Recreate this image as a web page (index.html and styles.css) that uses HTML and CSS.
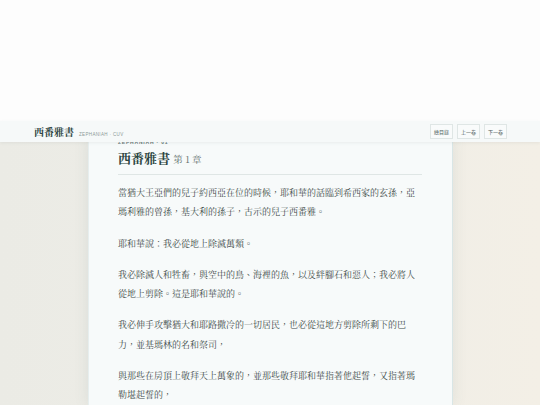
FILE: index.html
```html
<!DOCTYPE html>
<html lang="zh-Hant">
<head>
<meta charset="utf-8">
<title>西番雅書 第1章</title>
<link rel="stylesheet" href="styles.css">
</head>
<body>
<div class="top-space"></div>
<header class="bar">
  <div class="brand">
    <span class="brand-title">西番雅書</span>
    <span class="brand-sub">ZEPHANIAH · CUV</span>
  </div>
  <nav class="nav">
    <a class="btn">總目錄</a>
    <a class="btn">上一卷</a>
    <a class="btn">下一卷</a>
  </nav>
</header>
<main class="stage">
  <article class="card">
    <div class="eyebrow">ZEPHANIAH · 01</div>
    <h1 class="title">西番雅書 <span class="chap">第 1 章</span></h1>
    <div class="rule"></div>
    <p>當猶大王亞們的兒子約西亞在位的時候，耶和華的話臨到希西家的玄孫，亞瑪利雅的曾孫，基大利的孫子，古示的兒子西番雅。</p>
    <p>耶和華說：我必從地上除滅萬類。</p>
    <p>我必除滅人和牲畜，與空中的鳥、海裡的魚，以及絆腳石和惡人；我必將人從地上剪除。這是耶和華說的。</p>
    <p>我必伸手攻擊猶大和耶路撒冷的一切居民，也必從這地方剪除所剩下的巴力，並基瑪林的名和祭司，</p>
    <p>與那些在房頂上敬拜天上萬象的，並那些敬拜耶和華指著他起誓，又指著瑪勒堪起誓的，</p>
  </article>
</main>
</body>
</html>
```
FILE: styles.css
```css
html, body {
  margin: 0;
  padding: 0;
}
body {
  background: #fdfdfd;
  font-family: "Noto Serif CJK TC", "Liberation Serif", "Noto Sans CJK TC", serif;
  overflow: hidden;
  height: 405px;
}
.top-space {
  height: 121px;
  background: #fdfdfd;
}
.bar {
  position: relative;
  z-index: 2;
  height: 21px;
  background: rgba(246, 249, 249, 0.97);
  box-shadow: 0 1px 3px rgba(60, 80, 80, 0.08);
  display: flex;
  align-items: center;
  justify-content: space-between;
  padding: 0 33px 0 34px;
}
.brand {
  display: flex;
  align-items: baseline;
  gap: 5px;
}
.brand-title {
  font-size: 10px;
  font-weight: 700;
  color: #2c4541;
}
.brand-sub {
  font-family: "Liberation Sans", sans-serif;
  font-size: 4.5px;
  letter-spacing: 0.35px;
  color: #8c9a98;
}
.nav {
  display: flex;
  gap: 4px;
}
.btn {
  font-family: "Noto Sans CJK TC", sans-serif;
  font-size: 5px;
  color: #4a5a58;
  border: 1px solid #dfe6e5;
  background: #f9fbfb;
  height: 13px;
  padding: 0 3px;
  display: flex;
  align-items: center;
}
.stage {
  height: 263px;
  background: linear-gradient(90deg, #ebebe5 0%, #eeede7 45%, #f3efe6 100%);
  display: flex;
  justify-content: center;
  padding-left: 1px;
}
.card {
  width: 304px;
  margin-top: -6px;
  padding: 0 30px 0 29px;
  background: #f7fafa;
  border-left: 1px solid #e6eeee;
  border-right: 1px solid #d9e6e6;
  box-shadow: 0 0 14px rgba(70, 100, 100, 0.10);
  color: #3d4b49;
}
.eyebrow {
  font-family: "Liberation Sans", sans-serif;
  font-size: 5px;
  font-weight: 700;
  letter-spacing: 0.8px;
  color: #6d7d7b;
  height: 9px;
  line-height: 9px;
  padding-top: 2px;
}
.title {
  margin: 3px 0 0;
  font-size: 13px;
  font-weight: 700;
  line-height: 16px;
  color: #2c4541;
}
.chap {
  font-size: 9.5px;
  font-weight: 400;
  color: #5f6f6d;
}
.rule {
  height: 1px;
  background: #dfe6e5;
  margin: 7px 0 8px;
}
p {
  margin: 0 0 12px;
  font-size: 9px;
  line-height: 19.3px;
}
```
